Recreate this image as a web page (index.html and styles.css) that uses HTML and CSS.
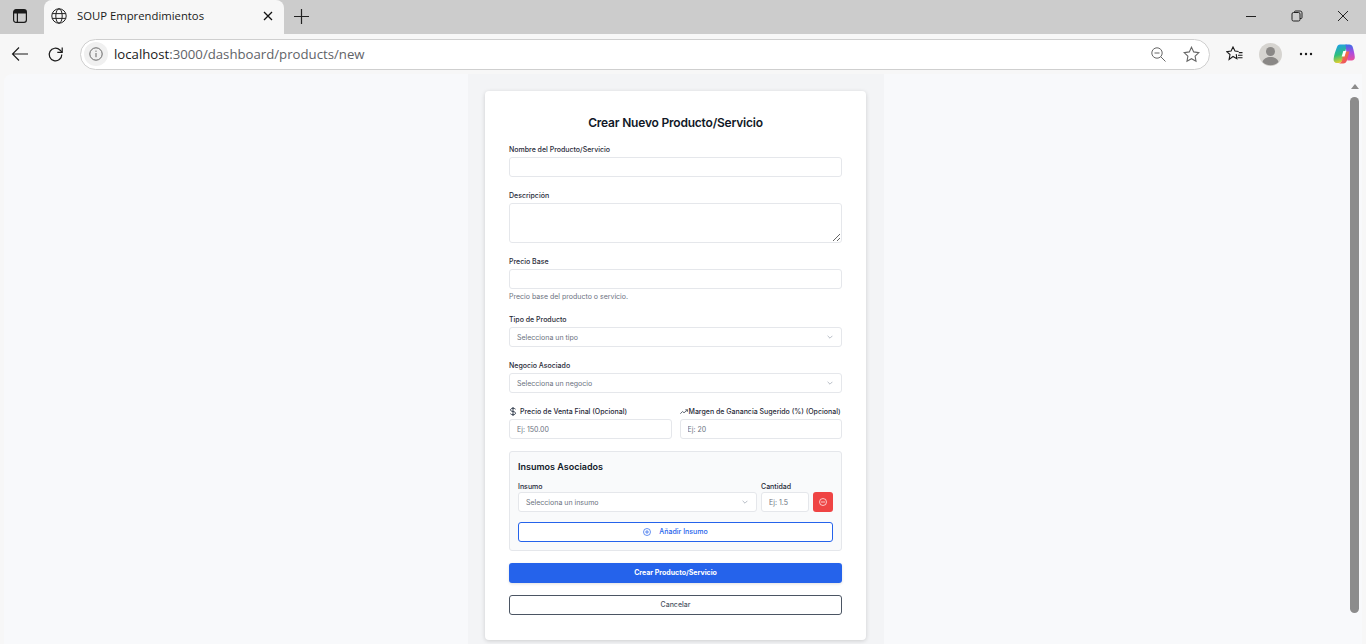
FILE: index.html
```html
<!DOCTYPE html>
<html lang="es">
<head>
  <meta charset="UTF-8" />
  <meta name="viewport" content="width=device-width, initial-scale=1.0"/>
  <title>SOUP Emprendimientos</title>
  <link rel="stylesheet" href="styles.css">
</head>
<body>
  <div class="tabstrip">
    <div class="tab-panel">
      <svg width="16" height="16" viewBox="0 0 16 16" fill="none" stroke="#1a1a1a" stroke-width="1.2"><rect x="1.6" y="1.6" width="12.8" height="12.8" rx="2.4"/><path d="M1.6 5h12.8M5.4 5v9.4"/><path d="M2 2h12v3H2z" fill="#1a1a1a" stroke="none"/></svg>
    </div>
    <div class="tab">
      <svg class="globe" width="16" height="16" viewBox="0 0 16 16" fill="none" stroke="#222" stroke-width="1"><circle cx="8" cy="8" r="7.2"/><ellipse cx="8" cy="8" rx="3.2" ry="7.2"/><path d="M1.2 5.6h13.6M1.2 10.4h13.6"/></svg>
      <span class="tab-title">SOUP Emprendimientos</span>
      <svg class="tab-close" width="10" height="10" viewBox="0 0 10 10" stroke="#111" stroke-width="1.3"><path d="M1 1l8 8M9 1l-8 8"/></svg>
    </div>
    <svg class="new-tab" width="15" height="15" viewBox="0 0 15 15" stroke="#222" stroke-width="1.2"><path d="M7.5 0v15M0 7.5h15"/></svg>
    <div class="window-controls">
      <svg width="12" height="12" viewBox="0 0 12 12" stroke="#222" stroke-width="1"><path d="M1 6.5h10"/></svg>
      <svg width="12" height="12" viewBox="0 0 12 12" fill="none" stroke="#222" stroke-width="1"><rect x="1" y="2.5" width="8" height="8.5" rx="1.5"/><path d="M3.5 2.5V2a1 1 0 0 1 1-1h4.700A1.800 1.800 0 0 1 11 2.800V7.500a1 1 0 0 1-1 1h-1"/></svg>
      <svg width="12" height="12" viewBox="0 0 12 12" stroke="#222" stroke-width="1"><path d="M1 1l10 10M11 1L1 11"/></svg>
    </div>
  </div>

  <div class="toolbar">
    <svg class="back" width="18" height="16" viewBox="0 0 18 16" fill="none" stroke="#1a1a1a" stroke-width="1.1"><path d="M17 8H1.500M8 1.500L1.500 8 8 14.500"/></svg>
    <svg class="reload" width="17" height="17" viewBox="0 0 17 17" fill="none" stroke="#1a1a1a" stroke-width="1.2"><path d="M14.800 8.500a6.300 6.300 0 1 1-1.900-4.500L15 6.100"/><path d="M15.200 1.500v4.900h-4.900"/></svg>
    <div class="address">
      <span class="site-info">
        <svg width="14" height="14" viewBox="0 0 14 14" fill="none" stroke="#666" stroke-width="1"><circle cx="7" cy="7" r="6.200"/><path d="M7 6v4.200M7 3.600v1.200"/></svg>
      </span>
      <span class="url"><span class="url-host">localhost</span>:3000/dashboard/products/new</span>
      <svg class="zoom-out" width="15" height="15" viewBox="0 0 15 15" fill="none" stroke="#666" stroke-width="1"><circle cx="6" cy="6" r="5.200"/><path d="M9.800 9.800L14.500 14.500M3.500 6h5"/></svg>
      <svg class="star" width="17" height="17" viewBox="0 0 17 17" fill="none" stroke="#666" stroke-width="1.100"><path d="M8.500 1.200l2.200 4.700 5.100.7-3.700 3.500.9 5.100-4.500-2.500-4.500 2.500.9-5.100L1.200 6.600l5.100-.7z"/></svg>
    </div>
    <svg class="favorites" width="17" height="17" viewBox="0 0 17 17" fill="none" stroke="#1a1a1a" stroke-width="1.100"><path d="M10.200 8.200l.7 4.500-3.900-2.200-3.900 2.900.9-4.900L.7 5.600l4.400-.6L7 1l2 4 3.600.5"/><path d="M12.800 6.600h3.700M12 9.200h4.500M11.600 11.800h4.900"/></svg>
    <svg class="profile" width="23" height="23" viewBox="0 0 23 23"><circle cx="11.500" cy="11.500" r="11.500" fill="#d6d4d0"/><circle cx="11.500" cy="8.500" r="4.500" fill="#8a8886"/><path d="M3.500 19c1-3.500 4-5 8-5s7 1.500 8 5a11.500 11.500 0 0 1-16 0z" fill="#8a8886"/></svg>
    <svg class="more" width="14" height="4" viewBox="0 0 14 4" fill="#1a1a1a"><circle cx="2" cy="2" r="1.200"/><circle cx="7" cy="2" r="1.200"/><circle cx="12" cy="2" r="1.200"/></svg>
    <svg class="copilot" width="22" height="22" viewBox="0 0 22 22">
      <defs>
        <linearGradient id="cpA" x1="0.300" y1="0" x2="0.500" y2="1"><stop offset="0" stop-color="#1f9fe8"/><stop offset="0.550" stop-color="#2fc07a"/><stop offset="1" stop-color="#f2d028"/></linearGradient>
        <linearGradient id="cpB" x1="0.500" y1="0" x2="0.500" y2="1"><stop offset="0" stop-color="#3a6fe8"/><stop offset="0.500" stop-color="#a94be0"/><stop offset="1" stop-color="#ec4f9a"/></linearGradient>
        <linearGradient id="cpC" x1="0" y1="0" x2="1" y2="1"><stop offset="0" stop-color="#f6932c"/><stop offset="1" stop-color="#ea3f6c"/></linearGradient>
      </defs>
      <path d="M7 1.500h6c.5 0 1 .3 1.100.8L9.500 17c-.5 1.800-1.800 3-3.700 3H3.800C1.700 20 .3 18.200.6 16 1 12 2.500 8 3.800 4.500 4.400 2.700 5.400 1.500 7 1.500z" fill="url(#cpA)"/>
      <path d="M12.500 1.500h3.800c1.800 0 3 1 3.500 2.800 1 3.200 1.700 6.700 2 9.700.2 2-1.200 3.600-3 3.600h-4.500z" fill="url(#cpB)"/>
      <path d="M10.500 8.500h6l-2.700 9.300c-.5 1.400-1.700 2.700-3.600 2.700H5.500c1.800-.2 3-1.300 3.500-3z" fill="url(#cpC)"/>
      <path d="M10.300 8h2.900l-1.600 5.500H8.700z" fill="#fff"/>
    </svg>
  </div>

  <div class="window-body">
    <main class="viewport">
      <div class="band">
        <section class="card">
          <h1 class="card-title">Crear Nuevo Producto/Servicio</h1>

          <form class="product-form">
            <div class="field">
              <label class="label">Nombre del Producto/Servicio</label>
              <input class="input" type="text">
            </div>
            <div class="field">
              <label class="label">Descripción</label>
              <textarea class="input textarea"></textarea>
            </div>
            <div class="field">
              <label class="label">Precio Base</label>
              <input class="input" type="text">
              <p class="help">Precio base del producto o servicio.</p>
            </div>
            <div class="field">
              <label class="label">Tipo de Producto</label>
              <div class="input select">
                <span>Selecciona un tipo</span>
                <svg class="chevron" width="6" height="4" viewBox="0 0 6 4" fill="none" stroke="#9aa1ad" stroke-width="0.700"><path d="M.6.800L3 3.200 5.400.800"/></svg>
              </div>
            </div>
            <div class="field">
              <label class="label">Negocio Asociado</label>
              <div class="input select">
                <span>Selecciona un negocio</span>
                <svg class="chevron" width="6" height="4" viewBox="0 0 6 4" fill="none" stroke="#9aa1ad" stroke-width="0.700"><path d="M.6.800L3 3.200 5.400.800"/></svg>
              </div>
            </div>
            <div class="two-cols">
              <div class="field">
                <label class="label label-icon">
                  <svg width="8" height="9" viewBox="0 0 8 9" fill="none" stroke="#374151" stroke-width="1"><path d="M4 0v9M6.500 2.200C6 1.500 5 1.300 4 1.300c-1.400 0-2.500.6-2.500 1.600S2.600 4.200 4 4.500s2.500.6 2.500 1.700S5.400 7.700 4 7.700c-1.100 0-2-.3-2.600-1"/></svg>
                  Precio de Venta Final (Opcional)
                </label>
                <input class="input" type="text" placeholder="Ej: 150.00">
              </div>
              <div class="field">
                <label class="label label-icon label-tight">
                  <svg width="8" height="6" viewBox="0 0 8 6" fill="none" stroke="#374151" stroke-width="0.800"><path d="M.3 4.700L2.600 2.500 4 3.800 7.400 1M5.300.8h2.300v2"/></svg>
                  Margen de Ganancia Sugerido (%) (Opcional)
                </label>
                <input class="input" type="text" placeholder="Ej: 20">
              </div>
            </div>

            <div class="supplies">
              <h2 class="supplies-title">Insumos Asociados</h2>
              <div class="supply-row">
                <div class="supply-name">
                  <label class="label label-small">Insumo</label>
                  <div class="input select">
                    <span>Selecciona un insumo</span>
                    <svg class="chevron" width="6" height="4" viewBox="0 0 6 4" fill="none" stroke="#9aa1ad" stroke-width="0.700"><path d="M.6.800L3 3.200 5.400.800"/></svg>
                  </div>
                </div>
                <div class="supply-qty">
                  <label class="label label-small">Cantidad</label>
                  <input class="input" type="text" placeholder="Ej: 1.5">
                </div>
                <button class="btn-remove" type="button">
                  <svg width="8" height="8" viewBox="0 0 8 8" fill="none" stroke="#fff" stroke-width="0.700"><circle cx="4" cy="4" r="3.500"/><path d="M2 4h4"/></svg>
                </button>
              </div>
              <button class="btn btn-add" type="button">
                <svg width="8" height="8" viewBox="0 0 8 8" fill="none" stroke="#2563eb" stroke-width="0.700"><circle cx="4" cy="4" r="3.500"/><path d="M2 4h4M4 2v4"/></svg>
                Añadir Insumo
              </button>
            </div>

            <button class="btn btn-primary" type="button">Crear Producto/Servicio</button>
            <button class="btn btn-outline" type="button">Cancelar</button>
          </form>
        </section>
      </div>
    </main>
    <div class="scrollbar">
      <span class="scroll-up"></span>
      <span class="scroll-thumb"></span>
    </div>
  </div>
</body>
</html>
```

FILE: styles.css
```css
html, body {
  height: 100%;
}

body {
  margin: 0;
  height: 644px;
  overflow: hidden;
  background: #f7f7f7;
  font-family: Inter, Arial, sans-serif;
  color: #111827;
}

/* browser chrome */
.tabstrip {
  display: flex;
  align-items: center;
  height: 34px;
  background: #cccccc;
}

.tab-panel {
  display: flex;
  width: 44px;
  justify-content: center;
  padding-right: 4px;
  margin-bottom: 2px;
  box-sizing: border-box;
}

.tab {
  display: flex;
  align-items: center;
  align-self: stretch;
  width: 240px;
  box-sizing: border-box;
  padding: 0 11px 2px 7px;
  background: #f7f7f7;
  border-radius: 8px 8px 0 0;
}

.tab-title {
  flex: 1;
  margin-left: 10px;
  margin-bottom: 1px;
  font-family: "Open Sans", Arial, sans-serif;
  font-size: 11.3px;
  color: #1a1a1a;
}

.new-tab {
  margin-left: 10px;
  margin-bottom: 2px;
}

.window-controls {
  display: flex;
  gap: 34px;
  margin-left: auto;
  margin-bottom: 2px;
  padding-right: 17px;
}

.toolbar {
  display: flex;
  align-items: center;
  height: 40px;
  background: #f7f7f7;
}

.back {
  margin-left: 11px;
}

.reload {
  margin-left: 18px;
}

.address {
  display: flex;
  align-items: center;
  width: 1130px;
  height: 31px;
  box-sizing: border-box;
  margin-left: 16px;
  padding-left: 3px;
  background: #fff;
  border: 1px solid #cfcfcf;
  border-radius: 16px;
}

.site-info {
  display: flex;
  align-items: center;
  justify-content: center;
  width: 24px;
  height: 24px;
  background: #f0f0f0;
  border-radius: 50%;
}

.url {
  flex: 1;
  margin-left: 6px;
  margin-bottom: 1px;
  font-family: "Open Sans", Arial, sans-serif;
  font-size: 13.2px;
  color: #5f6368;
}

.url-host {
  color: #1a1a1a;
}

.zoom-out {
  margin-right: 17px;
}

.star {
  margin-right: 9px;
}

.favorites {
  margin-left: 16px;
}

.profile {
  margin-left: 16px;
}

.more {
  margin-left: 17px;
}

.copilot {
  margin-left: 20px;
}

/* page area */
.window-body {
  display: flex;
  height: 570px;
  padding: 0 4px;
}

.viewport {
  flex: 1;
  display: flex;
  justify-content: center;
  overflow: hidden;
  background: #f8f9fb;
  border-radius: 8px 0 0 0;
}

.band {
  width: 416px;
  height: 570px;
  padding: 17px 17px 0;
  box-sizing: border-box;
  background: #f3f4f6;
}

.card {
  width: 381px;
  height: 549px;
  box-sizing: border-box;
  padding: 24px;
  background: #fff;
  border-radius: 4px;
  box-shadow: 0 1px 4px rgba(0, 0, 0, 0.16);
}

.card-title {
  margin: 0 0 15px;
  font-size: 12px;
  line-height: 16px;
  font-weight: 600;
  letter-spacing: -0.2px;
  text-align: center;
  color: #111827;
}

.product-form {
  display: flex;
  flex-direction: column;
  gap: 15px;
}

.field {
  display: flex;
  flex-direction: column;
  min-width: 0;
}

.label {
  display: block;
  margin-bottom: 4px;
  font-size: 7px;
  line-height: 7px;
  font-weight: 500;
  color: #1f2937;
}

.label-icon {
  display: flex;
  align-items: center;
  gap: 3px;
  height: 7px;
  white-space: nowrap;
}

.label-icon svg {
  flex: none;
}

.label-tight {
  gap: 1px;
}

.input {
  display: block;
  width: 100%;
  height: 20px;
  box-sizing: border-box;
  margin: 0;
  padding: 0 7px;
  background: #fff;
  border: 1px solid #e5e7eb;
  border-radius: 3px;
  font-family: Inter, Arial, sans-serif;
  font-size: 7px;
  color: #6b7280;
  outline: none;
}

.input::placeholder {
  color: #6b7280;
}

.textarea {
  height: 40px;
  padding-top: 4px;
  resize: vertical;
}

.help {
  margin: 3px 0 -1px;
  font-size: 7px;
  line-height: 10px;
  color: #6b7280;
}

.select {
  display: flex;
  align-items: center;
  justify-content: space-between;
  padding-right: 8px;
}

.two-cols {
  display: grid;
  grid-template-columns: 1fr 1fr;
  column-gap: 8px;
}

.supplies {
  display: flex;
  flex-direction: column;
  margin-top: -3px;
  padding: 8px;
  background: #f9fafb;
  border: 1px solid #e5e7eb;
  border-radius: 3px;
}

.supplies-title {
  margin: 0 0 9px;
  font-size: 9px;
  line-height: 14px;
  font-weight: 600;
  color: #111827;
}

.supply-row {
  display: flex;
  align-items: flex-end;
  gap: 4px;
}

.supply-name {
  flex: 1;
}

.supply-qty {
  width: 48px;
}

.label-small {
  margin-bottom: 2px;
}

.btn-remove {
  display: flex;
  align-items: center;
  justify-content: center;
  width: 20px;
  height: 20px;
  padding: 0;
  background: #ef4444;
  border: none;
  border-radius: 3px;
}

.btn {
  display: flex;
  align-items: center;
  justify-content: center;
  gap: 8px;
  width: 100%;
  height: 20px;
  padding: 0 0 1px;
  border-radius: 3px;
  font-family: Inter, Arial, sans-serif;
  font-size: 7px;
  font-weight: 500;
}

.btn-add {
  margin-top: 10px;
  background: #fff;
  border: 1px solid #2563eb;
  color: #2563eb;
}

.btn-primary {
  margin-top: -3px;
  background: #2563eb;
  border: none;
  color: #fff;
  font-weight: 700;
  box-shadow: 0 1px 3px rgba(0, 0, 0, 0.12);
}

.btn-outline {
  margin-top: -3px;
  background: #fff;
  border: 1px solid #4b5563;
  color: #4b5563;
}

/* scrollbar */
.scrollbar {
  position: relative;
  width: 14px;
  background: #f8f9fb;
}

.scroll-up {
  position: absolute;
  top: 10px;
  left: 3px;
  border: 4.500px solid transparent;
  border-top: 0;
  border-bottom: 5px solid #8c8c8c;
}

.scroll-thumb {
  position: absolute;
  top: 23px;
  left: 2px;
  width: 9px;
  height: 516px;
  background: #8c8c8c;
  border-radius: 5px;
}
```
